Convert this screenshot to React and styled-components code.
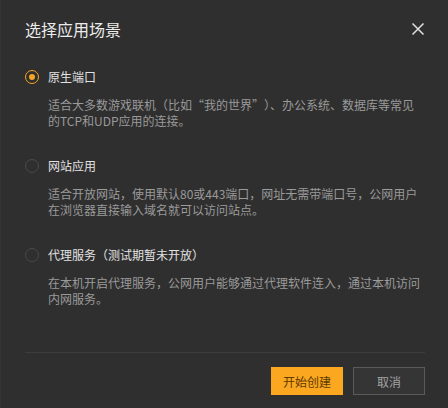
import React, { useState } from 'react';
import styled, { createGlobalStyle } from 'styled-components';

const GlobalStyle = createGlobalStyle`
    html, body {
        margin: 0;
        padding: 0;
        background: #2f2f2f;
    }
    body {
        font-family: "Noto Sans CJK SC", "Noto Sans", "Liberation Sans", sans-serif;
    }
`;

const Dialog = styled.div`
    width: 448px;
    height: 408px;
    box-sizing: border-box;
    background-color: #2f2f2f;
    border-left: 1px solid #353535;
    display: flex;
    flex-direction: column;
`;

const Header = styled.div`
    display: flex;
    align-items: center;
    justify-content: space-between;
    padding: 20px 23px 0 24px;
    height: 18px;
`;

const Title = styled.div`
    font-size: 16px;
    line-height: 18px;
    color: #ececec;
`;

const CloseButton = styled.button`
    background: none;
    border: none;
    padding: 0;
    width: 14px;
    height: 14px;
    display: flex;
    cursor: pointer;
`;

const Body = styled.div`
    flex: 1;
    padding: 29px 23px 0 24px;
    display: flex;
    flex-direction: column;
    gap: 27px;
`;

const Option = styled.div`
    display: flex;
    flex-direction: column;
    gap: 10px;
    cursor: ${p => (p.$disabled ? 'default' : 'pointer')};
`;

const OptionRow = styled.div`
    display: flex;
    align-items: center;
    height: 20px;
`;

const Radio = styled.span`
    box-sizing: border-box;
    width: 14px;
    height: 14px;
    border-radius: 50%;
    border: 1px solid ${p => (p.$checked ? '#f7a623' : '#4a4a4a')};
    margin-right: 9px;
    display: flex;
    align-items: center;
    justify-content: center;

    &::after {
        content: '';
        width: 6px;
        height: 6px;
        border-radius: 50%;
        background: ${p => (p.$checked ? '#f7a623' : 'transparent')};
    }
`;

const Label = styled.span`
    font-size: 12px;
    line-height: 20px;
    color: #e2e2e2;
`;

const Desc = styled.p`
    margin: 0;
    padding-left: 23px;
    font-size: 12px;
    line-height: 16px;
    color: #9a9a9a;
`;

// quotation marks take a full em, as in the CJK UI font
const Quote = styled.span`
    display: inline-block;
    width: 1em;
    text-align: ${p => (p.$open ? 'right' : 'left')};
`;

const Footer = styled.div`
    margin: 0 23px 13px 24px;
    border-top: 1px solid #3d3d3d;
    padding-top: 14px;
    display: flex;
    justify-content: flex-end;
    gap: 10px;
`;

const Button = styled.button`
    box-sizing: border-box;
    width: 72px;
    height: 28px;
    font-family: inherit;
    font-size: 12px;
    cursor: pointer;
    border: 1px solid ${p => (p.$primary ? '#fba71f' : '#5a5a5a')};
    background: ${p => (p.$primary ? '#fba71f' : '#353535')};
    color: ${p => (p.$primary ? '#5c3a00' : '#a3a3a3')};
`;

const options = [
    {
        key: 'port',
        label: '原生端口',
        desc: (
            <>
                适合大多数游戏联机（比如<Quote $open>“</Quote>我的世界<Quote>”</Quote>）、办公系统、数据库等常见的TCP和UDP应用的连接。
            </>
        ),
    },
    {
        key: 'web',
        label: '网站应用',
        desc: '适合开放网站，使用默认80或443端口，网址无需带端口号，公网用户在浏览器直接输入域名就可以访问站点。',
    },
    {
        key: 'proxy',
        label: '代理服务（测试期暂未开放）',
        desc: '在本机开启代理服务，公网用户能够通过代理软件连入，通过本机访问内网服务。',
        disabled: true,
    },
];

const App = () => {
    const [selected, setSelected] = useState('port');

    return (
        <>
            <GlobalStyle />
            <Dialog>
                <Header>
                    <Title>选择应用场景</Title>
                    <CloseButton aria-label="关闭">
                        <svg width="14" height="14" viewBox="0 0 14 14">
                            <path d="M1.5 1.5 L12.5 12.5 M12.5 1.5 L1.5 12.5" stroke="#e0e0e0" strokeWidth="1.5" fill="none" />
                        </svg>
                    </CloseButton>
                </Header>
                <Body>
                    {options.map(opt => (
                        <Option
                            key={opt.key}
                            $disabled={opt.disabled}
                            onClick={() => !opt.disabled && setSelected(opt.key)}
                        >
                            <OptionRow>
                                <Radio $checked={selected === opt.key} />
                                <Label>{opt.label}</Label>
                            </OptionRow>
                            <Desc>{opt.desc}</Desc>
                        </Option>
                    ))}
                </Body>
                <Footer>
                    <Button $primary>开始创建</Button>
                    <Button>取消</Button>
                </Footer>
            </Dialog>
        </>
    );
};

export default App;
